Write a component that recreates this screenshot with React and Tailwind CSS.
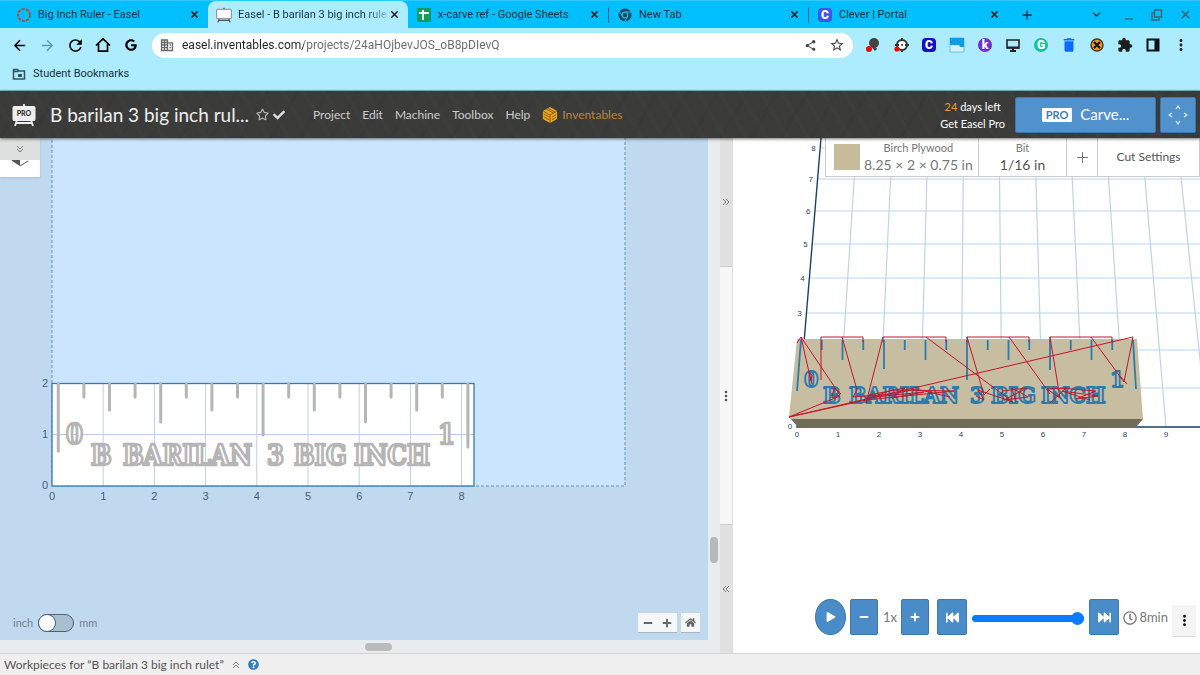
import { useState } from 'react';
import { ChevronDown, Minus, Monitor, Plus, X } from 'lucide-react';
import { FaCheck, FaFastBackward, FaFastForward, FaGoogle, FaHome, FaMinus, FaPlay, FaPlus, FaQuestionCircle, FaRegClock, FaRegStar } from 'react-icons/fa';
import { MdArrowBack, MdArrowForward, MdDelete, MdExtension, MdMoreVert, MdRefresh, MdShare, MdStarOutline } from 'react-icons/md';

const INCH = 51.2;
const tickLengths = [68, 14, 27, 14, 39, 14, 27, 14, 52, 14, 27, 14, 39, 14, 27, 14, 64];
const ticks3d = [51, 10, 20, 10, 29, 10, 20, 10, 40, 10, 20, 10, 30, 10, 20, 10, 49];
const gridRows = [[8, 148], [7, 179], [6, 211], [5, 244], [4, 278], [3, 313], [2, 350], [1, 388]];

const travel = [
  'M821 380V337H863V342', 'M883 342V337H946V342', 'M967 342V337H1029V342', 'M1050 342V337H1112V342',
  'M797 343L801 337L811 381L812 375L809 373L812 384', 'M801 337L840 395L832 398L834 388L841 394',
  'M840 396L789 417L1133 337L1124 382L1091 337', 'M789 417L866 400L954 391L892 390L870 398',
  'M842 337L857 390L853 397L893 394L916 389L950 397', 'M883 337L866 403L869 395L905 388L892 398L924 392L866 398',
  'M926 337L1013 402L978 390L984 400L976 396', 'M967 337L984 395L990 389', 'M1009 337L1050 394',
  'M1002 391L1027 388L1004 400L1028 397L1012 388L1016 402', 'M1050 337L1060 398L1047 389L1066 388L1050 403',
  'M1060 388L1096 391L1076 399L1098 396L1062 391L1090 400', 'M1120 376L1127 384',
];

function Carved({ words, size, y }) {
  return words.map(([word, x]) => (
    <text key={word + x} x={x} y={y} fontSize={size}>{word}</text>
  ));
}

function Easel({ pro }) {
  return (
    <svg viewBox="0 0 24 24" className={pro ? 'h-6 w-6 shrink-0' : 'h-4 w-4 shrink-0'}>
      <path d="M12 1v3M5 17l-2 6M19 17l2 6M4 20h16" fill="none" stroke={pro ? '#eee' : '#555'} strokeWidth="1.8" />
      <rect x="1" y="3.5" width="22" height="14" rx="1" fill={pro ? '#eee' : '#fff'} stroke={pro ? '#eee' : '#555'} />
      {pro && <text x="12" y="13" textAnchor="middle" fontSize="7" fontWeight="900" fill="#333" fontFamily="Lato, sans-serif">PRO</text>}
    </svg>
  );
}

function DashedRing() {
  return (
    <svg viewBox="0 0 16 16" className="h-4 w-4 shrink-0">
      <circle cx="8" cy="8" r="6" fill="none" stroke="#b5483f" strokeWidth="2" strokeDasharray="3 1.2" />
    </svg>
  );
}

function SheetsIcon() {
  return (
    <svg viewBox="0 0 16 16" className="h-4 w-4 shrink-0">
      <rect x="1" y="1" width="14" height="14" rx="1" fill="#159b5b" />
      <path d="M7 3v10M3 6h10" stroke="#fff" strokeWidth="1.8" />
    </svg>
  );
}

function ChromeIcon() {
  return (
    <svg viewBox="0 0 16 16" className="h-4 w-4 shrink-0">
      <circle cx="8" cy="8" r="6.5" fill="#254656" />
      <path d="M8 5h6.5M5.4 9.5L2.2 4M10.6 9.5L7.4 15" stroke="#00bfff" strokeWidth="1" />
      <circle cx="8" cy="8" r="3.4" fill="#00bfff" />
      <circle cx="8" cy="8" r="2.2" fill="#254656" />
    </svg>
  );
}

function LetterBadge({ letter, className }) {
  return <span className={'mx-px flex h-3.5 w-3.5 shrink-0 items-center justify-center text-xs font-black leading-none text-white ' + className}>{letter}</span>;
}

const tabs = [
  { title: 'Big Inch Ruler - Easel', icon: <DashedRing /> },
  { title: 'Easel - B barilan 3 big inch rule', icon: <Easel />, active: true },
  { title: 'x-carve ref - Google Sheets', icon: <SheetsIcon /> },
  { title: 'New Tab', icon: <ChromeIcon />, divided: true },
  { title: 'Clever | Portal', icon: <LetterBadge letter="C" className="rounded-sm bg-[#3f55e8]" />, divided: true },
];

const extensions = [
  ['Magnifier', <svg viewBox="0 0 16 16" className="h-4 w-4"><circle cx="9" cy="6" r="5" fill="#444" /><path d="M8 9l3 4" stroke="#444" strokeWidth="3" /><circle cx="4" cy="12" r="3" fill="#f00" /></svg>],
  ['Target', <svg viewBox="0 0 16 16" className="h-4 w-4"><circle cx="9" cy="8" r="5" fill="#fff" stroke="#333" strokeWidth="2" /><path d="M9 1v3M9 12v3M12 8h4M2 8h4" stroke="#333" strokeWidth="2" /><circle cx="9" cy="8" r="1" fill="#333" /><circle cx="4" cy="12" r="2.6" fill="#f00" /></svg>],
  ['Clever', <LetterBadge letter="C" className="rounded-sm bg-[#1510c8]" />],
  ['Screens', <svg viewBox="0 0 16 16" className="h-4 w-4"><path d="M1 1h14v14H1z" fill="#d8f1fc" stroke="#69bde8" /><path d="M1 1h14v9h-4l-1-2H1z" fill="#0e9ce5" /></svg>],
  ['Kami', <LetterBadge letter="k" className="rounded-full bg-[#7231c8]" />],
  ['Display', <svg viewBox="0 0 16 16" className="h-4 w-4"><path d="M2 3h12v8H2z" fill="#adebff" stroke="#222" strokeWidth="1.6" /><path d="M2 10.500h12M8 11v3M5 14h6" stroke="#222" strokeWidth="2" /></svg>],
  ['Grammarly', <LetterBadge letter="G" className="rounded-full bg-[#15c39a]" />],
  ['Cleaner', <MdDelete size={18} color="#0a6cff" />],
  ['Cookies', <svg viewBox="0 0 16 16" className="h-4 w-4"><circle cx="8" cy="8" r="6" fill="#e8962c" stroke="#4a3520" strokeWidth="1.4" /><path d="M5 5l6 6M11 5l-6 6" stroke="#111" strokeWidth="2" /></svg>],
  ['Extensions', <MdExtension size={16} color="#1d1d1d" />],
  ['Side panel', <svg viewBox="0 0 16 16" className="h-4 w-4"><path d="M2.5 2.5h11v11h-11z" fill="none" stroke="#111" strokeWidth="2" /><path d="M9.5 2h4v12h-4z" fill="#111" /></svg>],
  ['Menu', <MdMoreVert size={18} color="#222" />],
];

function Browser() {
  return (
    <div className="shrink-0 bg-[#adebff] font-[Roboto,sans-serif] text-[#17333d]">
      <div className="flex h-7 items-stretch border-t border-[#2ccbff] bg-[#00bfff] pl-2">
        {tabs.map(t => (
          <div
            key={t.title}
            className={'flex w-[200px] min-w-0 items-center pr-2 ' + (t.active ? 'rounded-t-lg bg-[#adebff]' : '')}
          >
            {t.divided && <span className="h-4 w-px bg-[#126985]" />}
            <button className="flex min-w-0 flex-1 items-center gap-1.5 pl-2 text-[11px] leading-4">
              {t.icon}
              <span className={'whitespace-nowrap ' + (t.active ? 'bg-linear-to-r from-[#17333d] from-85% to-[#8fc4d4] bg-clip-text text-transparent' : '')}>{t.title}</span>
            </button>
            <button aria-label="Close tab" className="ml-1"><X size={11} strokeWidth={3} color="#111" /></button>
          </div>
        ))}
        <div className="flex flex-1 items-center pl-3 text-[#12303b]">
          <button aria-label="New tab"><Plus size={14} strokeWidth={2.4} /></button>
          <div className="ml-auto flex items-center gap-4 pr-2">
            <button aria-label="Search tabs" className="mr-1"><ChevronDown size={13} strokeWidth={2.6} /></button>
            <button aria-label="Minimize" className="pt-2 text-[#3c7080]"><Minus size={12} strokeWidth={3} /></button>
            <button aria-label="Restore" className="text-[#3c6574]">
              <svg viewBox="0 0 12 12" className="h-3 w-3" fill="none" stroke="currentColor" strokeWidth="1.5"><path d="M3.5 1h7v7h-7zM3 4H1v7h7V9" /></svg>
            </button>
            <button aria-label="Close window" className="text-[#3c6574]"><X size={13} strokeWidth={3} /></button>
          </div>
        </div>
      </div>

      <div className="flex h-[34px] items-center pl-[5px] pr-[5px] text-black">
        <button aria-label="Back" className="flex w-7 justify-center"><MdArrowBack size={17} /></button>
        <button aria-label="Forward" className="flex w-7 justify-center text-[#6296a5]"><MdArrowForward size={17} /></button>
        <button aria-label="Reload" className="flex w-7 justify-center"><MdRefresh size={19} /></button>
        <button aria-label="Home" className="flex w-7 justify-center">
          <svg viewBox="0 0 16 16" className="h-4 w-4" fill="none" stroke="currentColor" strokeWidth="1.7"><path d="M1 8.500L8 1.800l7 6.700M3.500 7v7.200h9V7" /></svg>
        </button>
        <button aria-label="Google" className="flex w-7 justify-center"><FaGoogle size={12} /></button>
        <div className="ml-[7px] mr-1.5 flex h-[25px] flex-1 items-center gap-2 rounded-full bg-white pl-2 pr-2 text-[#444]">
          <svg viewBox="0 0 14 14" className="h-3.5 w-3.5 shrink-0" fill="none" stroke="#666" strokeWidth="1.3"><path d="M1.500 2h6v10.500h-6zM7.500 4.800h5v7.700h-5M1.500 4.500h6M1.500 7h6M1.500 9.700h6M4.500 2v10M9.500 7h1.500M9.500 9.700h1.500" /></svg>
          <input
            aria-label="Address"
            className="min-w-0 flex-1 bg-[linear-gradient(to_right,#222_122px,#6a6a6a_122px)] bg-clip-text text-[12px] leading-4 text-transparent outline-none"
            defaultValue="easel.inventables.com/projects/24aHOjbevJOS_oB8pDIevQ"
          />
          <button aria-label="Share"><MdShare size={13} /></button>
          <button aria-label="Bookmark" className="ml-1"><MdStarOutline size={16} /></button>
        </div>
        {extensions.map(([name, icon]) => (
          <button key={name} aria-label={name} className="flex w-7 justify-center">{icon}</button>
        ))}
      </div>

      <div className="flex h-[29px] items-center border-b border-[#7fb5c4] pb-1 pl-3">
        <button className="flex items-center gap-[7px] text-[11px] leading-4">
          <svg viewBox="0 0 14 14" className="h-3.5 w-3.5" fill="none" stroke="#37535c" strokeWidth="1.5"><path d="M1.500 2.500h4l1.500 1.500h5.500v8h-11zM1.500 4.500h5" /><path d="M6 7h4v3H6z" fill="#37535c" stroke="none" /></svg>
          Student Bookmarks
        </button>
      </div>
    </div>
  );
}

function Header() {
  return (
    <header className="relative z-10 flex h-[47px] shrink-0 items-center bg-[#3b3c3a] bg-[repeating-linear-gradient(60deg,transparent_0_14px,#ffffff03_14px_18px),repeating-linear-gradient(120deg,transparent_0_22px,#00000008_22px_26px)] pl-3 pr-1 text-[#eee] shadow-[0_1px_3px_#0008]">
      <Easel pro />
      <h1 className="ml-3.5 w-[204px] whitespace-nowrap text-[19px] leading-6">B barilan 3 big inch rul...</h1>
      <button aria-label="Favourite" className="ml-0.5"><FaRegStar size={13} color="#bbb" /></button>
      <FaCheck size={12} className="ml-1" color="#ddd" />
      <nav className="ml-7 flex items-center gap-3 whitespace-nowrap text-[12px] leading-4 text-[#ccc]">
        <a href="#project">Project</a>
        <a href="#edit">Edit</a>
        <a href="#machine">Machine</a>
        <a href="#toolbox">Toolbox</a>
        <a href="#help">Help</a>
        <a href="#inventables" className="flex items-center gap-1 text-[#b9843c]">
          <svg viewBox="0 0 16 18" className="h-4 w-4">
            <path d="M8 0l8 4.500v9L8 18l-8-4.500v-9z" fill="#eda41d" />
            <path d="M8 9v9M8 9l8-4.500M8 9L0 4.500M4 2.500l8 4.500M1 8l6 3.500M1 11l6 3.500M10 11.500l5-3M10 14.500l5-3M6 1.500l8 4.500" stroke="#70501c" strokeWidth="0.900" fill="none" />
          </svg>
          Inventables
        </a>
      </nav>
      <div className="ml-auto mr-2.5 text-center text-[11px] leading-[17px] text-white">
        <p><span className="text-[#e0a040]">24</span> days left</p>
        <a href="#pro">Get Easel Pro</a>
      </div>
      <button className="flex h-9 w-[141px] items-center justify-center gap-2 rounded-xs border border-[#3a76b0] bg-[#5292cc] text-[15px] text-white">
        <span className="rounded-[1px] bg-white px-1 text-[11px] font-bold leading-[14px] text-[#4080b8]">PRO</span>
        Carve...
      </button>
      <button aria-label="Jog machine" className="ml-1 flex h-9 w-9 items-center justify-center rounded-xs border border-[#3a76b0] bg-[#5292cc]">
        <svg viewBox="0 0 20 20" className="h-5 w-5" fill="none" stroke="#dcecf8" strokeWidth="1.200"><path d="M8 4l2-3 2 3M8 16l2 3 2-3M4 8l-3 2 3 2M16 8l3 2-3 2" /></svg>
      </button>
    </header>
  );
}

function DesignCanvas() {
  return (
    <svg viewBox="0 138 708 502" preserveAspectRatio="xMinYMin slice" className="absolute inset-0 h-full w-full">
      <rect x="52" y="130" width="573" height="356" fill="#cce5fe" stroke="#5b93c4" strokeDasharray="3 2" />
      <rect x="52" y="384" width="422" height="102" fill="#fff" />
      <g stroke="#bdcfe6">
        {[1, 2, 3, 4, 5, 6, 7, 8].map(n => <path key={n} d={`M${52 + n * INCH} 384v102`} />)}
        <path d="M52 434.500H474" />
      </g>
      <rect x="52" y="383.500" width="422" height="102.500" fill="none" stroke="#337ab0" strokeWidth="1.300" />
      <g stroke="#b5b5b5" strokeWidth="3" strokeLinecap="round">
        {tickLengths.map((len, i) => <path key={i} d={`M${58.3 + i * 25.6} 384v${len - 1}`} />)}
      </g>
      <g fill="#fff" stroke="#b5b5b5" strokeWidth="2.600" strokeLinejoin="round" fontWeight="700" fontFamily="'DejaVu Serif Condensed', 'DejaVu Serif', serif">
        <Carved words={[['B', 91], ['BARILAN', 123], ['3', 267], ['BIG', 294], ['INCH', 354]]} size={27} y={465} />
        <Carved words={[['0', 66], ['1', 438]]} size={27} y={444} />
      </g>
      <g fill="#3f5f7d" fontSize="11" fontFamily="'Liberation Sans', sans-serif" textAnchor="middle">
        {[0, 1, 2, 3, 4, 5, 6, 7, 8].map(n => <text key={n} x={52 + n * INCH} y="500">{n}</text>)}
        {[0, 1, 2].map(n => <text key={n} x="45" y={489 - n * INCH}>{n}</text>)}
      </g>
    </svg>
  );
}

function Preview3d() {
  return (
    <svg viewBox="733 138 467 515" preserveAspectRatio="xMinYMin slice" className="absolute inset-0 h-full w-full">
      <g stroke="#b9d5ee" strokeWidth="1.200">
        {[1, 2, 3, 4, 5, 6, 7, 8, 9, 10].map(n => <path key={n} d={`M${821.3 + n * 35.57} 138L${797 + n * 41} 427`} />)}
        {gridRows.map(([n, y]) => <path key={n} d={`M${797 + (427 - y) * 0.084} ${y}H1200`} />)}
      </g>
      <path d="M821 138L797 427H1200" fill="none" stroke="#1c4263" strokeWidth="1.400" />
      <path d="M789 417L798 427H1136L1143 419V417z" fill="#716b59" />
      <path d="M797 339H1137L1143 419H790L789 417z" fill="#c7bda1" />
      <g fill="none" stroke="#2b7bad" strokeWidth="1.800">
        {ticks3d.map((len, i) => {
          const lean = i === 0 ? -4 : i === 16 ? 3 : 0;
          return <path key={i} d={`M${801 + i * 20.75} 340l${lean} ${len}`} />;
        })}
        <g strokeLinejoin="round" fontWeight="700" fontFamily="'DejaVu Serif Condensed', 'DejaVu Serif', serif">
          <Carved words={[['B', 823], ['BARILAN', 849], ['3', 970], ['BIG', 991], ['INCH', 1041]]} size={23} y={403} />
          <Carved words={[['0', 804], ['1', 1110]]} size={23} y={387} />
        </g>
      </g>
      <g fill="none" stroke="#c4152b">
        {travel.map(d => <path key={d} d={d} />)}
      </g>
      <g fill="#2c4560" fontSize="8" fontFamily="'Liberation Sans', sans-serif" textAnchor="middle">
        {[0, 1, 2, 3, 4, 5, 6, 7, 8, 9].map(n => <text key={n} x={797 + n * 41} y="437">{n}</text>)}
        {gridRows.slice(0, 6).map(([n, y]) => <text key={n} x={790 + (427 - y) * 0.084} y={y + 3}>{n}</text>)}
        <text x="790" y="429">0</text>
      </g>
    </svg>
  );
}

function Chevrons({ d }) {
  return <svg viewBox="0 0 8 8" className="h-2 w-2" fill="none" stroke="#777" strokeWidth="1"><path d={d} /></svg>;
}

function Workspace() {
  const [mm, setMm] = useState(false);
  return (
    <section className="flex min-w-0 flex-1 bg-[#e9ecef]">
      <div className="flex min-w-0 flex-1 flex-col">
        <div className="relative flex-1 overflow-hidden bg-[#c0d9ef]">
          <DesignCanvas />
          <div className="absolute left-0 top-0 w-10 bg-white shadow">
            <button aria-label="Collapse tools" className="flex h-[22px] w-full items-center justify-center bg-[#dedfdf]"><Chevrons d="M1 1l3 3 3-3M1 4l3 3 3-3" /></button>
            <button aria-label="Shapes" className="flex h-[17px] w-full items-start justify-center">
              <svg viewBox="0 0 18 8" className="h-2 w-[18px]"><path d="M1 1l8 5V0H1z" fill="#555" /><path d="M9 6l8-5" fill="none" stroke="#555" /></svg>
            </button>
          </div>
          <label className="absolute bottom-2 left-[13px] flex items-center gap-[5px] text-[11px] leading-4 text-[#71818f]">
            inch
            <input
              type="checkbox"
              aria-label="Use millimetres"
              checked={mm}
              onChange={e => setMm(e.target.checked)}
              className="flex h-[18px] w-9 appearance-none rounded-full border border-[#48637a] bg-[#a9bfd0] before:h-4 before:w-4 before:rounded-full before:bg-white before:shadow-[0_0_0_1px_#48637a] checked:justify-end"
            />
            mm
          </label>
          <div className="absolute bottom-2 right-2 flex gap-1 text-[#666]">
            <div className="flex h-[19px] bg-[#f4f6f7] shadow-[0_1px_0_#a9b8c5]">
              <button aria-label="Zoom out" className="flex w-[19px] items-center justify-center"><FaMinus size={10} /></button>
              <button aria-label="Zoom in" className="flex w-5 items-center justify-center"><FaPlus size={10} /></button>
            </div>
            <button aria-label="Reset view" className="flex h-[19px] w-[19px] items-center justify-center bg-[#f4f6f7] shadow-[0_1px_0_#a9b8c5]"><FaHome size={11} /></button>
          </div>
        </div>
        <div className="flex h-[13px] items-center justify-center pl-12"><div className="h-2 w-[27px] rounded-full bg-[#b9bbbd]" /></div>
      </div>
      <div className="flex w-3 flex-col items-center justify-end pb-[90px]"><div className="h-[26px] w-2 rounded-full bg-[#b4b9bb]" /></div>
      <div className="flex w-[13px] flex-col border-r border-[#ddd] bg-[#e1e1e1]">
        <button aria-label="Expand editor" className="flex flex-1 items-center justify-center"><Chevrons d="M1 1l3 3-3 3M4 1l3 3-3 3" /></button>
        <div className="flex flex-2 items-center justify-center border-y border-[#ccc] bg-[#f7f7f7]">
          <svg viewBox="0 0 4 12" className="h-3 w-1" fill="#555"><circle cx="2" cy="2" r="1.300" /><circle cx="2" cy="6" r="1.300" /><circle cx="2" cy="10" r="1.300" /></svg>
        </div>
        <button aria-label="Expand preview" className="flex flex-1 items-center justify-center"><Chevrons d="M4 1L1 4l3 3M7 1L4 4l3 3" /></button>
      </div>
    </section>
  );
}

function Preview() {
  const blueButton = 'flex h-9 items-center justify-center border border-[#3a78ae] bg-[#4a8cc7] text-white';
  return (
    <section className="relative w-[467px] shrink-0 overflow-hidden bg-white">
      <Preview3d />
      <div className="absolute right-0 top-0 flex h-[39px] divide-x divide-[#ccc] border border-t-0 border-[#ccc] bg-white text-[#777]">
        <button className="flex w-[153px] items-center gap-1 pl-2">
          <span className="h-[26px] w-[26px] shrink-0 bg-[#c6bb9a]" />
          <span className="whitespace-nowrap text-[11px] leading-4">Birch Plywood<span className="block text-[14px] leading-[18px]">8.25 × 2 × 0.75 in</span></span>
        </button>
        <button className="w-[88px] text-[11px] leading-4">Bit<span className="block text-[14px] leading-[18px] text-[#555]">1/16 in</span></button>
        <button aria-label="Add bit" className="flex w-[31px] items-center justify-center"><Plus size={17} strokeWidth={1.5} /></button>
        <button className="w-[101px] text-[12px] leading-4 text-[#555]">Cut Settings</button>
      </div>
      <div className="absolute bottom-4 right-1 flex items-start text-[13px] leading-9 text-[#777]">
        <button aria-label="Play" className={blueButton + ' w-[31px] rounded-[50%]'}><FaPlay size={10} /></button>
        <button aria-label="Slower" className={blueButton + ' ml-1 w-7 rounded-xs'}><FaMinus size={10} /></button>
        <span className="w-[23px] text-center">1x</span>
        <button aria-label="Faster" className={blueButton + ' w-7 rounded-xs'}><FaPlus size={10} /></button>
        <button aria-label="To start" className={blueButton + ' ml-2 w-[30px] rounded-xs'}><FaFastBackward size={13} /></button>
        <input
          type="range"
          aria-label="Simulation progress"
          defaultValue="100"
          className="mx-[5px] h-[7px] w-28 appearance-none self-center rounded-full bg-[#0a7cff] [&::-webkit-slider-thumb]:h-[13px] [&::-webkit-slider-thumb]:w-[13px] [&::-webkit-slider-thumb]:appearance-none [&::-webkit-slider-thumb]:rounded-full [&::-webkit-slider-thumb]:bg-[#0a7cff]"
        />
        <button aria-label="To end" className={blueButton + ' w-[30px] rounded-xs'}><FaFastForward size={13} /></button>
        <FaRegClock size={14} className="ml-1 self-center" />
        <span className="ml-0.5">8min</span>
        <button aria-label="Simulation options" className="ml-1 mt-1.5 flex h-8 w-6 items-center justify-center border-b border-[#ddd] bg-[#f4f4f4]"><MdMoreVert size={17} color="#111" /></button>
      </div>
    </section>
  );
}

export default function App() {
  return (
    <div className="flex h-screen flex-col overflow-hidden font-[Lato,sans-serif]">
      <Browser />
      <Header />
      <main className="flex min-h-0 flex-1">
        <Workspace />
        <Preview />
      </main>
      <footer className="flex h-[22px] shrink-0 items-center gap-2 border-t border-[#d4d4d6] bg-[#efefef] pl-1 text-[12px] leading-4 text-[#555]">
        Workpieces for “B barilan 3 big inch rulet”
        <button aria-label="Expand workpieces"><Chevrons d="M1 4l3-3 3 3M1 7l3-3 3 3" /></button>
        <a href="#help" aria-label="Help"><FaQuestionCircle size={11} color="#2d7fc1" /></a>
      </footer>
    </div>
  );
}
